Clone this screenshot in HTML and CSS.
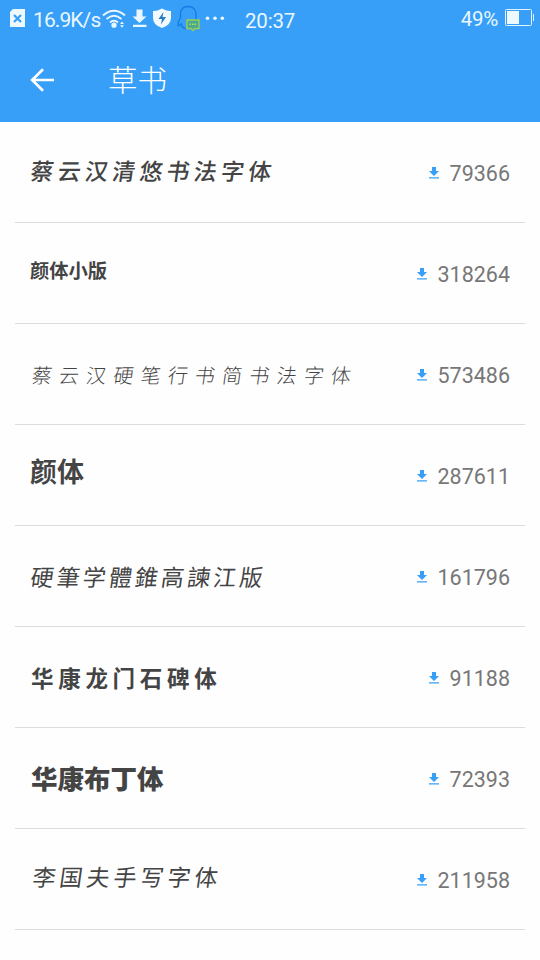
FILE: index.html
```html
<!DOCTYPE html>
<html lang="zh-CN">
<head>
<meta charset="utf-8">
<title>草书</title>
<link rel="stylesheet" href="styles.css">
</head>
<body>
<svg width="0" height="0" class="defs"><symbol id="dl" viewBox="0 0 10 12"><path d="M3 0h4v4h3L5 9 0 4h3zM0 10.2h10v1.3H0z" fill="currentColor"/></symbol></svg>
<header class="top">
  <div class="status">
    <svg class="icons-left" width="30" height="38" viewBox="0 0 30 38"><path d="M13 9h12v18H10V12z" fill="#eef8ff"/><path d="M14 15l7 7m0-7l-7 7" stroke="#379ff8" stroke-width="2.2"/></svg>
    <span class="speed">16.9K/s</span>
    <svg class="icons-right" width="130" height="38" viewBox="100 0 130 38">
      <g fill="none" stroke="#eaf7ff" stroke-width="2"><path d="M103 15.5Q114 6 125 15.5M106.500 19Q114 12.500 121.500 19M110 22.500Q114 19 118 22.500"/></g>
      <circle cx="114" cy="25.200" r="2.600" fill="#eaf7ff"/><path d="M120 24l2-2.500 2 2.500zm0 1.300l2 2.500 2-2.500z" fill="#eaf7ff"/>
      <path d="M136.500 9.500h6v7h4L139.500 23l-7-6.500h4zM133 24.700h13.500V27H133z" fill="#eaf7ff"/>
      <path d="M162 8.500q5 2.800 9 2.500v7q0 7-9 10-9-3-9-10v-7q4 .3 9-2.500z" fill="#f2faff"/><path d="M163.500 12l-5 7h3.500l-1 5.500 5-7.500h-3.500z" fill="#247bc8"/>
      <path d="M180.500 17q-1-10.500 7.500-10.500T196 16v4M181 17q-4 6-2.500 9l2.500-2q1 4 5 4.700" fill="none" stroke="#147ce5" stroke-width="1.300"/>
      <path d="M187 20h12v8.500h-4l-2 2-2-2h-4z" fill="#4ba98e" stroke="#99ce57" stroke-width="1.400"/><path d="M189.500 24.200h7" stroke="#b4e35b" stroke-width="1.500" stroke-dasharray="1.500 1"/>
      <g fill="#eaf7ff"><circle cx="207.500" cy="18.300" r="1.800"/><circle cx="215" cy="18.300" r="1.800"/><circle cx="222.300" cy="18.300" r="1.800"/></g>
    </svg>
    <span class="clock">20:37</span>
    <span class="percent">49%</span>
    <svg class="battery" width="30" height="20" viewBox="0 0 30 20"><rect x=".5" y="1.500" width="26" height="16" rx="1" fill="none" stroke="#dff3ff"/><path d="M2 3h12v13H2z" fill="#eef8ff"/><path d="M28.500 6v7" stroke="#dff3ff"/></svg>
  </div>
  <div class="bar">
    <svg width="26" height="26" viewBox="0 0 26 26"><path d="M25 13H3M14 2.200L3.200 13 14 23.800" fill="none" stroke="#fff" stroke-width="2.700"/></svg>
    <h1>草书</h1>
  </div>
</header>
<main class="list">
  <div class="row"><span class="name brush">蔡云汉清悠书法字体</span><span class="count"><svg><use href="#dl"/></svg>79366</span></div>
  <div class="row"><span class="name yan-small">颜体小版</span><span class="count"><svg><use href="#dl"/></svg>318264</span></div>
  <div class="row"><span class="name pen">蔡云汉硬笔行书简书法字体</span><span class="count"><svg><use href="#dl"/></svg>573486</span></div>
  <div class="row"><span class="name yan">颜体</span><span class="count"><svg><use href="#dl"/></svg>287611</span></div>
  <div class="row"><span class="name cursive">硬筆学體錐高諫江版</span><span class="count"><svg><use href="#dl"/></svg>161796</span></div>
  <div class="row"><span class="name stele">华康龙门石碑体</span><span class="count"><svg><use href="#dl"/></svg>91188</span></div>
  <div class="row"><span class="name pudding">华康布丁体</span><span class="count"><svg><use href="#dl"/></svg>72393</span></div>
  <div class="row"><span class="name hand">李国夫手写字体</span><span class="count"><svg><use href="#dl"/></svg>211958</span></div>
</main>
</body>
</html>
```
FILE: styles.css
```css
* { box-sizing: border-box; }
body { margin: 0; background: #fefefe; font-family: Roboto, "Noto Sans CJK SC", sans-serif; }
svg { display: block; flex: none; }
.defs { position: absolute; }
.top { height: 122px; background: #379ff8; color: #eaf7ff; }
.status { display: flex; height: 38px; font-size: 21px; line-height: 40px; white-space: nowrap; }
.speed { width: 70px; padding-left: 3px; font-size: 21px; letter-spacing: -.900px; }
.icons-right { width: 130px; }
.clock { margin-left: 15px; font-size: 20.500px; line-height: 42px; letter-spacing: -.200px; }
.percent { margin-left: auto; font-size: 20.500px; line-height: 38px; letter-spacing: -.300px; }
.battery { margin: 8px 5px 0 7px; }
.bar { display: flex; align-items: center; height: 84px; padding-left: 29px; }
.bar h1 { margin: 0 0 5px 53px; color: #fff; font: 300 29.500px/44px "Noto Sans CJK SC", sans-serif; }
.list { padding: 0 15px; }
.row { display: flex; align-items: center; justify-content: space-between; height: 101px; padding: 0 15px 0 16px; border-bottom: 1px solid #dcdcdc; }
.name { color: #444; font-family: "Noto Sans CJK SC", sans-serif; line-height: 40px; white-space: nowrap; transform-origin: left center; }
.count { display: flex; align-items: center; padding-top: 3px; color: #777; font-size: 21.500px; font-weight: 400; }
.count svg { width: 10px; height: 12px; margin: 0 11px 2px 0; color: #379ff8; }
.brush { margin-top: -4px; font-size: 23px; font-weight: 500; letter-spacing: 4.200px; transform: skewX(-8deg); }
.yan-small { margin: -6px 0 0 -1px; font-size: 19.300px; font-weight: 700; }
.pen { margin-top: 2px; font-size: 20px; font-weight: 300; letter-spacing: 7.200px; transform: translateX(1px) skewX(-8deg); }
.yan { margin: -8px 0 0 -1px; font-size: 27px; font-weight: 700; }
.cursive { margin-top: 0; font-size: 23px; font-weight: 400; letter-spacing: 3.100px; transform: skewX(-8deg); }
.stele { font-size: 22.500px; font-weight: 700; letter-spacing: 4.700px; }
.pudding { font-size: 26.500px; font-weight: 900; }
.hand { margin-top: -6px; font-size: 23px; font-weight: 400; letter-spacing: 4px; transform: translateX(2px) skewX(-8deg); }
```
